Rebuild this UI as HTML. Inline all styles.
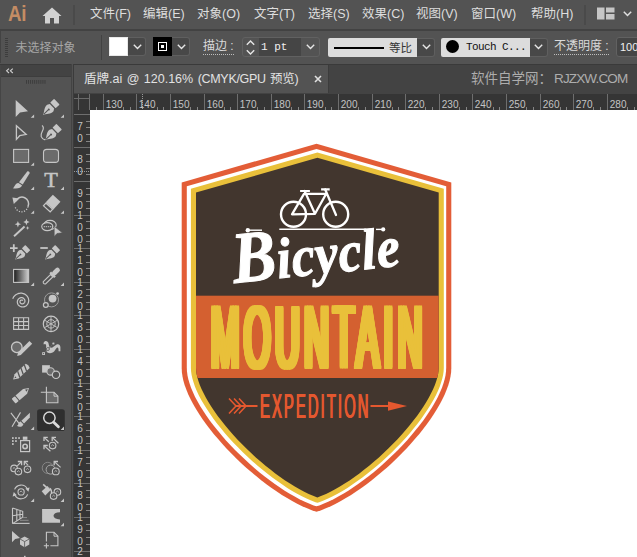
<!DOCTYPE html>
<html><head><meta charset="utf-8">
<style>
html,body{margin:0;padding:0;}
body{width:637px;height:557px;overflow:hidden;background:#535353;position:relative;font-family:"Liberation Sans","Noto Sans CJK SC",sans-serif;color:#dcdcdc;}
.abs{position:absolute;}
#menubar{left:0;top:0;width:637px;height:30px;background:#535353;}
#menubar .mi{position:absolute;top:5px;font-size:12.5px;line-height:18px;color:#dedede;white-space:nowrap;}
#sep1{left:0;top:29px;width:637px;height:2px;background:#424242;}
#ctrl{left:0;top:31px;width:637px;height:33px;background:#535353;}
#ctrl .t{position:absolute;top:6px;font-size:12px;line-height:18px;white-space:nowrap;color:#dadada;}
#ctrl .dd{position:absolute;top:6px;height:19px;width:18px;background:#484848;border:1px solid #5f5f5f;border-left:none;border-radius:0 3px 3px 0;box-sizing:border-box;}
#sep2{left:0;top:64px;width:637px;height:1px;background:#3a3a3a;}
#tabrow{left:73px;top:65px;width:564px;height:29px;background:#434343;}
#tab{left:74px;top:65px;width:254px;height:28px;background:#535353;}
#tools{left:0;top:65px;width:71px;height:492px;background:#535353;}
#toolhead{left:0;top:65px;width:71px;height:11px;background:#434343;}
#gap{left:71px;top:64px;width:3px;height:493px;background:linear-gradient(90deg,#434343 0,#434343 33.3%,#515151 33.3%,#515151 66.6%,#3b3b3b 66.6%,#3b3b3b 100%);}
#hruler{left:74px;top:94px;width:563px;height:16px;background:#3c3c3c;}
#vruler{left:74px;top:94px;width:16px;height:463px;background:#3c3c3c;}
.rl{position:absolute;font-size:10px;line-height:12px;color:#c4c4c4;white-space:nowrap;}
#canvas{left:90px;top:110px;width:547px;height:447px;background:#fff;}
</style></head><body>
<!-- MENUBAR -->
<div id="menubar" class="abs">
<div class="abs" style="left:8px;top:1.6px;font-size:21.8px;line-height:24px;font-weight:bold;color:#c48c64;letter-spacing:-0.4px;transform:scaleX(0.86);transform-origin:0 0;">Ai</div>
<svg class="abs" style="left:42px;top:7px" width="20" height="17" viewBox="0 0 20 17"><path d="M10 0.5 L19.5 9 L17 9 L17 16.5 L12 16.5 L12 11 L8 11 L8 16.5 L3 16.5 L3 9 L0.5 9 Z" fill="#d2d2d2"/></svg>
<div class="abs" style="left:73px;top:5px;width:2px;height:20px;background:#4a4a4a"></div>
<div class="mi" style="left:90px">文件(F)</div>
<div class="mi" style="left:143px">编辑(E)</div>
<div class="mi" style="left:197px">对象(O)</div>
<div class="mi" style="left:254px">文字(T)</div>
<div class="mi" style="left:308px">选择(S)</div>
<div class="mi" style="left:362px">效果(C)</div>
<div class="mi" style="left:416px">视图(V)</div>
<div class="mi" style="left:471px">窗口(W)</div>
<div class="mi" style="left:531px">帮助(H)</div>
<div class="abs" style="left:584px;top:5px;width:2px;height:20px;background:#4a4a4a"></div>
<svg class="abs" style="left:597px;top:7px" width="18" height="13" viewBox="0 0 18 13"><rect x="0" y="0.5" width="7.5" height="12" fill="#c6c6c6"/><rect x="9" y="0.5" width="8.5" height="5" fill="#c6c6c6"/><rect x="9" y="7" width="8.5" height="5.5" fill="#c6c6c6"/></svg>
<svg class="abs" style="left:622.5px;top:10.5px" width="9" height="6" viewBox="0 0 9 6"><path d="M0.8 0.8 L4.5 4.5 L8.2 0.8" fill="none" stroke="#e0e0e0" stroke-width="1.5"/></svg>
</div>
<div id="sep1" class="abs"></div>
<!-- CONTROL BAR -->
<div id="ctrl" class="abs">
<svg class="abs" style="left:5px;top:7px" width="4" height="20" viewBox="0 0 4 20"><g fill="#3d3d3d"><rect x="0" y="0" width="3" height="1"/><rect x="0" y="2" width="3" height="1"/><rect x="0" y="4" width="3" height="1"/><rect x="0" y="6" width="3" height="1"/><rect x="0" y="8" width="3" height="1"/><rect x="0" y="10" width="3" height="1"/><rect x="0" y="12" width="3" height="1"/><rect x="0" y="14" width="3" height="1"/><rect x="0" y="16" width="3" height="1"/><rect x="0" y="18" width="3" height="1"/></g></svg>
<div class="abs" style="left:0;top:0;width:1px;height:32px;background:#434343"></div>
<div class="t" style="left:15.5px;top:7.8px;color:#a6a6a6">未选择对象</div>
<div class="abs" style="left:101px;top:4px;width:1px;height:25px;background:#424242"></div>
<!-- fill swatch -->
<div class="abs" style="left:109px;top:6px;width:19px;height:19px;background:#fff;box-sizing:border-box;border:1px solid #e8e8e8"></div>
<div class="dd" style="left:128px"></div>
<svg class="abs" style="left:133px;top:13px" width="9" height="6" viewBox="0 0 9 6"><path d="M0.8 0.8 L4.5 4.5 L8.2 0.8" fill="none" stroke="#e6e6e6" stroke-width="1.4"/></svg>
<!-- stroke swatch -->
<div class="abs" style="left:153px;top:6px;width:19px;height:19px;background:#000;box-sizing:border-box;"></div>
<svg class="abs" style="left:158px;top:11px" width="9" height="9" viewBox="0 0 9 9"><rect x="0.5" y="0.5" width="8" height="8" fill="none" stroke="#fff" stroke-width="1"/><rect x="3" y="3" width="3" height="3" fill="#fff"/></svg>
<div class="dd" style="left:172px"></div>
<svg class="abs" style="left:177px;top:13px" width="9" height="6" viewBox="0 0 9 6"><path d="M0.8 0.8 L4.5 4.5 L8.2 0.8" fill="none" stroke="#e6e6e6" stroke-width="1.4"/></svg>
<div class="t" style="left:203px;border-bottom:1px dotted #bdbdbd;height:16px;line-height:16px;top:7px">描边 :</div>
<!-- spinner -->
<div class="abs" style="left:242px;top:6px;width:78px;height:20px;box-sizing:border-box;border:1px solid #616161;border-radius:3px;background:#535353"></div>
<svg class="abs" style="left:246px;top:9px" width="9" height="15" viewBox="0 0 9 15"><path d="M0.8 4.8 L4.5 1.1 L8.2 4.8 M0.8 10.2 L4.5 13.9 L8.2 10.2" fill="none" stroke="#e6e6e6" stroke-width="1.4"/></svg>
<div class="abs" style="left:259px;top:7px;width:42px;height:18px;background:#454545"></div>
<div class="abs" style="left:261px;top:7px;font-family:'Liberation Mono',monospace;font-size:11px;line-height:18px;color:#f0f0f0;white-space:pre">1 pt</div>
<svg class="abs" style="left:306px;top:13px" width="9" height="6" viewBox="0 0 9 6"><path d="M0.8 0.8 L4.5 4.5 L8.2 0.8" fill="none" stroke="#e6e6e6" stroke-width="1.4"/></svg>
<!-- stroke profile -->
<div class="abs" style="left:328px;top:7px;width:89px;height:19px;background:#dcdcdc;border-radius:2px 0 0 2px"></div>
<div class="abs" style="left:334px;top:15.6px;width:50px;height:2.6px;background:#000"></div>
<div class="abs" style="left:389px;top:8px;font-size:11.5px;line-height:18px;color:#333;white-space:nowrap">等比</div>
<div class="dd" style="left:417px;top:7px;height:19px"></div>
<svg class="abs" style="left:422px;top:13px" width="9" height="6" viewBox="0 0 9 6"><path d="M0.8 0.8 L4.5 4.5 L8.2 0.8" fill="none" stroke="#e6e6e6" stroke-width="1.4"/></svg>
<!-- brush -->
<div class="abs" style="left:441px;top:7px;width:89px;height:19px;background:#dcdcdc;border-radius:2px 0 0 2px"></div>
<div class="abs" style="left:446px;top:9px;width:13px;height:13px;border-radius:50%;background:#000"></div>
<div class="abs" style="left:466px;top:7px;font-family:'Liberation Mono',monospace;font-size:11px;line-height:18px;color:#111;white-space:pre;letter-spacing:-0.6px">Touch C...</div>
<div class="dd" style="left:530px;top:7px;height:19px"></div>
<svg class="abs" style="left:534px;top:13px" width="9" height="6" viewBox="0 0 9 6"><path d="M0.8 0.8 L4.5 4.5 L8.2 0.8" fill="none" stroke="#e6e6e6" stroke-width="1.4"/></svg>
<div class="t" style="left:554px;border-bottom:1px dotted #bdbdbd;height:16px;line-height:16px;top:7px">不透明度 :</div>
<div class="abs" style="left:616px;top:6px;width:30px;height:20px;box-sizing:border-box;border:1px solid #616161;border-radius:3px;background:#454545"></div>
<div class="abs" style="left:620px;top:7px;font-size:11px;line-height:18px;color:#f0f0f0;">100</div>
</div>
<div id="sep2" class="abs"></div>
<div id="tabrow" class="abs"></div>
<div id="tab" class="abs"></div>
<div class="abs" style="left:328px;top:65px;width:1px;height:28px;background:#3c3c3c"></div>
<div class="abs tabt" style="left:84px;top:70px;font-size:12.5px;line-height:18px;color:#e2e2e2;white-space:nowrap;word-spacing:1px">盾牌.ai @ 120.16% <span style="letter-spacing:-0.3px">(CMYK/GPU 预览)</span></div>
<svg class="abs" style="left:314px;top:75px" width="8" height="8" viewBox="0 0 8 8"><path d="M1 1 L7 7 M7 1 L1 7" stroke="#e0e0e0" stroke-width="1.6" fill="none"/></svg>
<div class="abs tabt" style="left:471px;top:69px;font-size:13.5px;line-height:20px;color:#adadad;white-space:nowrap">软件自学网：<span style="letter-spacing:-0.85px;margin-left:2px">RJZXW.COM</span></div>
<div id="tools" class="abs"></div>
<div id="toolhead" class="abs"></div>
<div id="gap" class="abs"></div>
<div class="abs" style="left:0;top:76px;width:71px;height:1px;background:#3d3d3d"></div>
<div class="abs" style="left:0;top:65px;width:1px;height:492px;background:#454545"></div>
<!-- TOOLS -->
<svg class="abs" style="left:0;top:65px" width="72" height="492" viewBox="0 65 72 492">
<path d="M9,68.6 L6.6,70.8 L9,73 M12.8,68.6 L10.4,70.8 L12.8,73" fill="none" stroke="#d0d0d0" stroke-width="1.1"/>
<g fill="#3c3c3c"><rect x="26.00" y="80" width="0.9" height="3.8"/><rect x="28.06" y="80" width="0.9" height="3.8"/><rect x="30.12" y="80" width="0.9" height="3.8"/><rect x="32.18" y="80" width="0.9" height="3.8"/><rect x="34.24" y="80" width="0.9" height="3.8"/><rect x="36.30" y="80" width="0.9" height="3.8"/><rect x="38.36" y="80" width="0.9" height="3.8"/><rect x="40.42" y="80" width="0.9" height="3.8"/><rect x="42.48" y="80" width="0.9" height="3.8"/><rect x="44.54" y="80" width="0.9" height="3.8"/></g>
<path d="M15.7,99.9 V117 L20,112.4 L28,111.3 Z" fill="#c6c6c6"/>
<path d="M30.7,117.8 h3.4 v-3.4 Z" fill="#c6c6c6"/>
<g transform="translate(43,115) rotate(46) scale(1.170,0.960)"><path d="M0,0 C-0.8,-3 -4.4,-6.5 -3.9,-10.6 L-2.7,-13 L2.7,-13 L3.9,-10.6 C4.4,-6.5 0.8,-3 0,0 Z" fill="#c6c6c6"/><rect x="-3.4" y="-20" width="6.8" height="5.6" rx="0.6" fill="#c6c6c6"/><path d="M0,-1.2 V-8" stroke="#535353" stroke-width="0.9"/><circle cx="0" cy="-8.4" r="0.9" fill="#535353"/></g>
<path d="M60.6,117.8 h3.4 v-3.4 Z" fill="#c6c6c6"/>
<path d="M16.4,125.8 V139.4 L19.7,135.7 L26.2,134.4 Z" fill="none" stroke="#c6c6c6" stroke-width="1.3" stroke-linejoin="miter"/>
<g transform="translate(45.3,140) rotate(46) scale(1.170,0.960)"><path d="M0,0 C-0.8,-3 -4.4,-6.5 -3.9,-10.6 L-2.7,-13 L2.7,-13 L3.9,-10.6 C4.4,-6.5 0.8,-3 0,0 Z" fill="#c6c6c6"/><rect x="-3.4" y="-20" width="6.8" height="5.6" rx="0.6" fill="#c6c6c6"/><path d="M0,-1.2 V-8" stroke="#535353" stroke-width="0.9"/><circle cx="0" cy="-8.4" r="0.9" fill="#535353"/></g>
<path d="M42,125.4 C46.5,128.5 39.6,132.5 41.2,136.6 C42,138.6 43.8,139.6 45.2,139.9" fill="none" stroke="#c6c6c6" stroke-width="1.2"/>
<rect x="13.6" y="149.4" width="15" height="13" fill="#6b6b6b" stroke="#c6c6c6" stroke-width="1.1"/>
<path d="M30.7,165.8 h3.4 v-3.4 Z" fill="#c6c6c6"/>
<rect x="43.5" y="149.4" width="15" height="13" rx="3.2" fill="#6b6b6b" stroke="#c6c6c6" stroke-width="1.1"/>
<path d="M27.2,171.4 C28.6,170.8 30.2,172 29.5,173.6 L22.7,184.6 L19,182.2 Z" fill="#c6c6c6"/>
<path d="M18.4,182.9 L22,185.3 C21.4,188.2 16.8,189 12.8,188.2 C15.2,186.6 14.6,183.2 18.4,182.9 Z" fill="#c6c6c6"/>
<path d="M30.7,190 h3.4 v-3.4 Z" fill="#c6c6c6"/>
<text x="51" y="186.8" text-anchor="middle" font-family="'Liberation Serif',serif" font-size="20.6" fill="#c6c6c6" stroke="#c6c6c6" stroke-width="0.5" transform="translate(51,0) scale(1.08,1) translate(-51,0)">T</text>
<path d="M60.6,190 h3.4 v-3.4 Z" fill="#c6c6c6"/>
<path d="M15.8,201 A6.6,6.6 0 1 1 28,206.6" fill="none" stroke="#c6c6c6" stroke-width="1.5"/>
<path d="M12.4,197.4 L19.4,198.4 L13.8,204 Z" fill="#c6c6c6"/>
<path d="M28,206.6 A6.6,6.6 0 0 1 15,206" fill="none" stroke="#c6c6c6" stroke-width="1.3" stroke-dasharray="1.1 1.5"/>
<path d="M30.7,213.8 h3.4 v-3.4 Z" fill="#c6c6c6"/>
<g transform="translate(51.6,203.7) rotate(-47)"><rect x="-3" y="-5.2" width="10.4" height="10.4" fill="#c6c6c6"/><rect x="-7" y="-4.6" width="3.6" height="9.2" fill="none" stroke="#c6c6c6" stroke-width="1.2"/></g>
<path d="M60.6,213.8 h3.4 v-3.4 Z" fill="#c6c6c6"/>
<path d="M13.4,235.6 L23.9,225.8 L25.2,227.2 L14.7,237 Z" fill="#c6c6c6"/>
<path d="M17.9,221.0 L18.796,223.304 L21.099999999999998,224.2 L18.796,225.09599999999998 L17.9,227.39999999999998 L17.003999999999998,225.09599999999998 L14.7,224.2 L17.003999999999998,223.304 Z" fill="#c6c6c6"/>
<path d="M26.4,218.8 L27.296,221.104 L29.599999999999998,222 L27.296,222.896 L26.4,225.2 L25.503999999999998,222.896 L23.2,222 L25.503999999999998,221.104 Z" fill="#c6c6c6"/>
<path d="M27.6,226.1 L28.132,227.468 L29.5,228 L28.132,228.532 L27.6,229.9 L27.068,228.532 L25.700000000000003,228 L27.068,227.468 Z" fill="#c6c6c6"/>
<ellipse cx="50" cy="225" rx="6.2" ry="4.6" fill="none" stroke="#c6c6c6" stroke-width="1.1"/>
<ellipse cx="47.3" cy="226.6" rx="5.6" ry="4" fill="#535353" stroke="#c6c6c6" stroke-width="1.1"/>
<path d="M43.8,226.6 H53" stroke="#c6c6c6" stroke-width="1.1" stroke-dasharray="1 1"/>
<path d="M54.2,226.3 V236.6 L57,233.5 L62.4,232.8 Z" fill="#c6c6c6" stroke="#535353" stroke-width="0.6"/>
<path d="M10,248.1 H17.6 M13.8,244.3 V251.9" stroke="#c6c6c6" stroke-width="1.8"/>
<g transform="translate(15.2,259.4) rotate(47) scale(1.053,0.864)"><path d="M0,0 C-0.8,-3 -4.4,-6.5 -3.9,-10.6 L-2.7,-13 L2.7,-13 L3.9,-10.6 C4.4,-6.5 0.8,-3 0,0 Z" fill="#c6c6c6"/><rect x="-3.4" y="-20" width="6.8" height="5.6" rx="0.6" fill="#c6c6c6"/><path d="M0,-1.2 V-8" stroke="#535353" stroke-width="0.9"/><circle cx="0" cy="-8.4" r="0.9" fill="#535353"/></g>
<path d="M40.3,248 H47.8" stroke="#c6c6c6" stroke-width="1.8"/>
<g transform="translate(45.1,259.4) rotate(47) scale(1.053,0.864)"><path d="M0,0 C-0.8,-3 -4.4,-6.5 -3.9,-10.6 L-2.7,-13 L2.7,-13 L3.9,-10.6 C4.4,-6.5 0.8,-3 0,0 Z" fill="#c6c6c6"/><rect x="-3.4" y="-20" width="6.8" height="5.6" rx="0.6" fill="#c6c6c6"/><path d="M0,-1.2 V-8" stroke="#535353" stroke-width="0.9"/><circle cx="0" cy="-8.4" r="0.9" fill="#535353"/></g>
<defs><linearGradient id="gr" x1="0" x2="1" y1="0" y2="0"><stop offset="0" stop-color="#1a1a1a"/><stop offset="1" stop-color="#cfcfcf"/></linearGradient></defs>
<rect x="13.6" y="269.4" width="15" height="13" fill="url(#gr)" stroke="#c6c6c6" stroke-width="1.1"/>
<path d="M30.7,286 h3.4 v-3.4 Z" fill="#c6c6c6"/>
<g transform="translate(43.4,283.7) rotate(46)"><path d="M-1.6,-1.4 V-11.5 H1.6 V-1.4 Q0,0.8 -1.6,-1.4 Z" fill="none" stroke="#c6c6c6" stroke-width="1.1"/><rect x="-3.4" y="-14" width="6.8" height="2.4" fill="#c6c6c6"/><rect x="-2.4" y="-22" width="4.8" height="9" rx="2.4" fill="#c6c6c6"/></g>
<path d="M60.6,286 h3.4 v-3.4 Z" fill="#c6c6c6"/>
<path d="M12.7,298.8 L13.1,298.0 L13.5,297.2 L14.0,296.5 L14.6,295.9 L15.2,295.3 L15.9,294.8 L16.6,294.3 L17.3,294.0 L18.1,293.6 L18.8,293.4 L19.6,293.3 L20.4,293.2 L21.1,293.2 L21.9,293.2 L22.6,293.4 L23.4,293.6 L24.1,293.8 L24.7,294.1 L25.3,294.5 L25.9,294.9 L26.4,295.4 L26.9,295.9 L27.3,296.4 L27.7,297.0 L28.0,297.6 L28.3,298.2 L28.5,298.9 L28.6,299.5 L28.7,300.1 L28.7,300.8 L28.6,301.4 L28.5,302.0 L28.4,302.6 L28.1,303.2 L27.9,303.7 L27.6,304.2 L27.2,304.7 L26.9,305.1 L26.4,305.5 L26.0,305.9 L25.5,306.2 L25.0,306.4 L24.5,306.6 L24.0,306.8 L23.5,306.9 L23.0,306.9 L22.4,307.0 L21.9,306.9 L21.4,306.8 L20.9,306.7 L20.5,306.5 L20.0,306.3 L19.6,306.1 L19.2,305.8 L18.9,305.5 L18.5,305.1 L18.2,304.8 L18.0,304.4 L17.8,304.0 L17.6,303.6 L17.5,303.1 L17.4,302.7 L17.3,302.3 L17.3,301.8 L17.4,301.4 L17.4,301.0 L17.5,300.6 L17.7,300.2 L17.9,299.9 L18.1,299.5 L18.3,299.2 L18.6,298.9 L18.8,298.6 L19.1,298.4 L19.4,298.2 L19.8,298.0 L20.1,297.9 L20.5,297.8 L20.8,297.7 L21.2,297.7 L21.5,297.7 L21.9,297.7 L22.2,297.7 L22.5,297.8 L22.9,297.9 L23.2,298.1 L23.4,298.3 L23.7,298.4 L23.9,298.7 L24.2,298.9 L24.3,299.1 L24.5,299.4 L24.6,299.7 L24.8,299.9 L24.8,300.2 L24.9,300.5 L24.9,300.8 L24.9,301.1 L24.9,301.4 L24.9,301.6 L24.8,301.9 L24.7,302.2 L24.6,302.4 L24.5,302.6 L24.3,302.9 L24.1,303.0 L23.9,303.2 L23.7,303.4 L23.5,303.5 L23.3,303.6 L23.1,303.7 L22.9,303.8 L22.6,303.8 L22.4,303.8 L22.2,303.8 L21.9,303.8 L21.7,303.8 L21.5,303.7 L21.3,303.6 L21.1,303.6 L20.9,303.4 L20.7,303.3 L20.6,303.2 L20.5,303.0 L20.3,302.9 L20.2,302.7 L20.1,302.5 L20.1,302.3 L20.0,302.2 L20.0,302.0 L20.0,301.8 L20.0,301.6 L20.0,301.4 L20.0,301.3 L20.1,301.1 L20.2,300.9 L20.2,300.8 L20.3,300.6 L20.4,300.5 L20.5,300.4 L20.7,300.3 L20.8,300.2 L20.9,300.1 L21.0,300.1 L21.2,300.0 L21.3,300.0 L21.5,300.0 L21.6,300.0 L21.7,300.0 L21.9,300.0 L22.0,300.0 L22.1,300.1 L22.2,300.1 L22.4,300.2 L22.4,300.3 L22.5,300.3 L22.6,300.4 L22.7,300.5 L22.7,300.6 L22.8,300.7" fill="none" stroke="#c6c6c6" stroke-width="1.2"/>
<circle cx="51.5" cy="299.9" r="7" fill="none" stroke="#9c9c9c" stroke-width="1"/><circle cx="52.6" cy="298.6" r="3.9" fill="#c6c6c6"/><circle cx="45.8" cy="305" r="2.4" fill="#535353" stroke="#c6c6c6" stroke-width="1.2"/><circle cx="57.6" cy="293.6" r="1.4" fill="#c6c6c6"/>
<path d="M13.6,317.7 H28.6 V329.4 H13.6 Z M18.6,317.7 V329.4 M23.6,317.7 V329.4 M13.6,321.6 H28.6 M13.6,325.5 H28.6" fill="none" stroke="#c6c6c6" stroke-width="1.1"/>
<circle cx="51" cy="323.9" r="7.7" fill="none" stroke="#c6c6c6" stroke-width="1.2"/><circle cx="51" cy="323.9" r="4.2" fill="none" stroke="#c6c6c6" stroke-width="1"/><path d="M51,323.9 L57.7,327.8 M51,323.9 L51.0,331.6 M51,323.9 L44.3,327.8 M51,323.9 L44.3,320.0 M51,323.9 L51.0,316.2 M51,323.9 L57.7,320.0 " stroke="#c6c6c6" stroke-width="0.9" fill="none"/>
<circle cx="16.8" cy="347.3" r="5.3" fill="#6b6b6b" stroke="#c6c6c6" stroke-width="1.3"/>
<path d="M29.4,341 L32.2,343.8 L20.8,355 L17.2,356 L18,352.4 Z" fill="#c6c6c6"/>
<path d="M45,341.2 C46.6,340.6 48.2,341.6 48.6,343.6 C49,345.6 49.2,347 50.4,347.6 C52.4,348.4 54.4,345.4 56.6,344.4 C58.6,343.6 60.2,344.6 60.4,347 L60.4,351.2 L58.6,351.2 C58.6,349 58.4,347.4 57.4,347.4 C56,347.6 55.4,350.8 52.6,352.6 C50.4,353.8 47.6,353.4 46.6,351.6 C45.4,349.4 46.6,346.8 46,344.8 C45.6,343.8 44.6,343.6 43.8,344.6 C43.2,343 43.8,341.8 45,341.2 Z" fill="#c6c6c6"/><path d="M44.6,352.6 L53,344" stroke="#6a6a6a" stroke-width="0.8"/><rect x="42.2" y="352.2" width="2.8" height="2.8" fill="#c6c6c6"/><rect x="43.1" y="353.1" width="1" height="1" fill="#535353"/><circle cx="47.9" cy="349" r="1.5" fill="#c6c6c6" stroke="#555" stroke-width="0.8"/><circle cx="53.4" cy="343.5" r="1.3" fill="#c6c6c6" stroke="#535353" stroke-width="0.5"/>
<g transform="translate(13.1,379.6) rotate(47)"><path d="M0,0 L-2.9,-4.8 L-2.9,-20 Q0,-21.6 2.9,-20 L2.9,-4.8 Z" fill="#c6c6c6"/><path d="M-3,-9 L3,-6.4 M-3,-13.6 L3,-11 M-3,-18.2 L3,-15.6" stroke="#535353" stroke-width="1.3"/><path d="M0,-1.8 L-0.9,-3.8 H0.9 Z" fill="#535353"/></g>
<rect x="42.1" y="365.2" width="7.8" height="7.4" fill="#c6c6c6"/><circle cx="50.6" cy="371.4" r="3.7" fill="#6b6b6b" stroke="#c6c6c6" stroke-width="1.1"/><circle cx="56" cy="374.8" r="3.7" fill="#535353" stroke="#c6c6c6" stroke-width="1.2"/>
<g transform="translate(29.2,387.8) rotate(49.2)"><path d="M0,0.2 L3.1,5.4 V15.4 H-3.1 V5.4 Z" fill="#c6c6c6"/><path d="M0,1.8 L1.3,4.4 H-1.3 Z" fill="#535353"/><rect x="-3.1" y="16.4" width="6.2" height="4.2" rx="0.9" fill="#c6c6c6"/></g>
<path d="M46.4,392.3 H54 L57.9,396.2 V402.8 H46.4 Z" fill="#6b6b6b" stroke="#c6c6c6" stroke-width="1.1"/><path d="M54,392.3 V396.2 H57.9" fill="none" stroke="#c6c6c6" stroke-width="1"/><path d="M40.8,392.3 H46.4 M46.4,386.8 V392.3" stroke="#c6c6c6" stroke-width="1.1"/>
<path d="M10.9,412.9 L20,424.7 M20.5,412.4 L12,426.8" stroke="#c6c6c6" stroke-width="1.1" fill="none"/>
<path d="M29.9,412.8 L29.8,417.6 L24,423.4 L21.4,420.8 Z" fill="#c6c6c6"/><path d="M20.6,421.4 L23.4,424.2 C22.8,427 19,427.4 16.8,425.8 C19,425 18.2,421.8 20.6,421.4 Z" fill="#c6c6c6"/>
<path d="M30.7,430 h3.4 v-3.4 Z" fill="#c6c6c6"/>
<rect x="37.1" y="409.2" width="27.7" height="21.9" rx="2.6" fill="#2f2f2f"/><circle cx="49.4" cy="417.8" r="5.7" fill="none" stroke="#dadada" stroke-width="1.5"/><path d="M53.7,422.2 L58.4,426.8" stroke="#dadada" stroke-width="2.8" stroke-linecap="round"/>
<path d="M60.6,430 h3.4 v-3.4 Z" fill="#c6c6c6"/>
<rect x="20.6" y="440.6" width="9" height="11" fill="none" stroke="#c6c6c6" stroke-width="1.2"/><circle cx="25.1" cy="446.4" r="2.2" fill="none" stroke="#c6c6c6" stroke-width="1.6"/><rect x="22.8" y="436.6" width="4.6" height="3.2" fill="#c6c6c6"/>
<g fill="#c6c6c6"><rect x="12" y="437.2" width="1.7" height="1.7"/><rect x="15.1" y="437.2" width="1.7" height="1.7"/><rect x="18.2" y="437.2" width="1.7" height="1.7"/><rect x="12" y="440.2" width="1.7" height="1.7"/><rect x="15.1" y="440.2" width="1.7" height="1.7"/><rect x="12" y="443.2" width="1.7" height="1.7"/></g>
<path d="M44.6,437.9 L48.8,441.7" stroke="#c6c6c6" stroke-width="1.2" fill="none"/><path d="M47.8,437.3 L44.0,437.3 L44.0,441.1" stroke="#c6c6c6" stroke-width="1.3" fill="none"/>
<path d="M52.8,437.9 L58.4,443.3" stroke="#c6c6c6" stroke-width="1.2" fill="none"/><path d="M56.0,437.3 L52.2,437.3 L52.2,441.1" stroke="#c6c6c6" stroke-width="1.3" fill="none"/>
<path d="M44.6,446.1 L50.4,451.3" stroke="#c6c6c6" stroke-width="1.2" fill="none"/><path d="M47.8,445.5 L44.0,445.5 L44.0,449.3" stroke="#c6c6c6" stroke-width="1.3" fill="none"/>
<circle cx="52.6" cy="445.6" r="3.3" fill="#535353" stroke="#c6c6c6" stroke-width="1.1"/><path d="M51.300000000000004,445.90000000000003 L52.6,444.70000000000005 L53.9,445.90000000000003" fill="none" stroke="#c6c6c6" stroke-width="0.8"/>
<circle cx="14.1" cy="468.4" r="3.3" fill="#535353" stroke="#c6c6c6" stroke-width="1.1"/><path d="M12.799999999999999,468.7 L14.1,467.5 L15.4,468.7" fill="none" stroke="#c6c6c6" stroke-width="0.8"/>
<circle cx="18.4" cy="471.6" r="3.3" fill="#535353" stroke="#c6c6c6" stroke-width="1.1"/><path d="M17.099999999999998,471.90000000000003 L18.4,470.70000000000005 L19.7,471.90000000000003" fill="none" stroke="#c6c6c6" stroke-width="0.8"/>
<circle cx="27.5" cy="469.3" r="3.3" fill="#535353" stroke="#c6c6c6" stroke-width="1.1"/><path d="M26.2,469.6 L27.5,468.40000000000003 L28.8,469.6" fill="none" stroke="#c6c6c6" stroke-width="0.8"/>
<path d="M21.0,462.1 L17.3,465.8" stroke="#c6c6c6" stroke-width="1.2" fill="none"/><path d="M17.8,461.5 L21.6,461.5 L21.6,465.3" stroke="#c6c6c6" stroke-width="1.3" fill="none"/>
<path d="M24.9,462.1 L28.0,465.2" stroke="#c6c6c6" stroke-width="1.2" fill="none"/><path d="M28.1,461.5 L24.3,461.5 L24.3,465.3" stroke="#c6c6c6" stroke-width="1.3" fill="none"/>
<circle cx="47.8" cy="467.9" r="5.6" fill="none" stroke="#858585" stroke-width="1"/><circle cx="50.6" cy="469.6" r="4.5" fill="#535353" stroke="#a8a8a8" stroke-width="1"/>
<circle cx="55.8" cy="471.4" r="3.4" fill="#535353" stroke="#c6c6c6" stroke-width="1.1"/><path d="M54.5,471.7 L55.8,470.5 L57.099999999999994,471.7" fill="none" stroke="#c6c6c6" stroke-width="0.8"/>
<path d="M54.8,462.1 L60.6,467.4" stroke="#c6c6c6" stroke-width="1.2" fill="none"/><path d="M58.0,461.5 L54.2,461.5 L54.2,465.3" stroke="#c6c6c6" stroke-width="1.3" fill="none"/>
<circle cx="21.1" cy="491.9" r="3.1" fill="#535353" stroke="#c6c6c6" stroke-width="1.1"/><path d="M19.8,492.2 L21.1,491.0 L22.400000000000002,492.2" fill="none" stroke="#c6c6c6" stroke-width="0.8"/>
<path d="M14.6,489.4 A7,7 0 0 1 27.2,488.6 M27.6,494.4 A7,7 0 0 1 15,495.2" fill="none" stroke="#c6c6c6" stroke-width="1.2"/><path d="M25.4,488.6 L29.6,487.4 L28.4,491.8 Z M16.8,495.2 L12.6,496.4 L13.8,492 Z" fill="#c6c6c6"/>
<path d="M30.7,502 h3.4 v-3.4 Z" fill="#c6c6c6"/>
<path d="M41.7,491.2 L45.3,495.4 L50.7,490.1 L47.5,485.9 Z" fill="#c6c6c6"/><path d="M43.2,484.4 L47,487.8" stroke="#c6c6c6" stroke-width="1.6" fill="none"/><path d="M49.6,487.6 C51.6,488.4 52.4,490.6 52.4,494 L50.8,493 C51,491.4 50.6,490.4 49.6,489.8 Z" fill="#c6c6c6"/>
<circle cx="57.4" cy="491.9" r="3.3" fill="#535353" stroke="#c6c6c6" stroke-width="1.1"/><path d="M56.1,492.2 L57.4,491.0 L58.699999999999996,492.2" fill="none" stroke="#c6c6c6" stroke-width="0.8"/>
<circle cx="53.6" cy="496.1" r="3.3" fill="#535353" stroke="#c6c6c6" stroke-width="1.1"/><path d="M52.300000000000004,496.40000000000003 L53.6,495.20000000000005 L54.9,496.40000000000003" fill="none" stroke="#c6c6c6" stroke-width="0.8"/>
<path d="M60.6,502 h3.4 v-3.4 Z" fill="#c6c6c6"/>
<path d="M12.5,508.1 V523.6 M12.5,508.1 L22.7,511.3 V517.2 L12.5,523.6 M16.8,509.4 V520.9 M20,510.4 V518.9 M12.5,515.8 L22.7,514.3" fill="none" stroke="#c6c6c6" stroke-width="1.1"/>
<path d="M22.7,517.6 H27 M20,520.3 H28.6" stroke="#8e8e8e" stroke-width="1"/><path d="M12.5,523.4 H29.6" stroke="#c6c6c6" stroke-width="1.1"/>
<path d="M42.1,508.9 H60 V512.3 C51.4,512.3 51.4,519.4 60,519.4 V522.8 H42.1 Z" fill="#c6c6c6"/>
<path d="M60.6,526.2 h3.4 v-3.4 Z" fill="#c6c6c6"/>
<path d="M12,531.1 V542.3 L15.2,539.1 L20,538 Z" fill="#c6c6c6"/>
<path d="M24.6,536.4 L29.3,539 V544.6 L24.6,547.2 L20,544.6 V539 Z" fill="#c6c6c6"/><path d="M20,539 L24.6,541.6 L29.3,539 M24.6,541.6 V547.2" fill="none" stroke="#535353" stroke-width="0.8"/>
<path d="M46.4,541.6 V532.3 H54 L57.9,536.2 V545.8 H50.4" fill="none" stroke="#c6c6c6" stroke-width="1.1"/><path d="M54,532.3 V536.2 H57.9" fill="none" stroke="#c6c6c6" stroke-width="1"/><path d="M43.8,545.8 H49 M46.4,543.2 V548.4" stroke="#c6c6c6" stroke-width="1.1"/>
<rect x="24" y="555.8" width="1.6" height="1.2" fill="#c6c6c6"/>
</svg>
<!-- /TOOLS -->
<div id="canvas" class="abs"></div>
<!-- BADGE -->
<svg class="abs" style="left:90px;top:110px" width="547" height="447" viewBox="90 110 547 447">
<defs><clipPath id="brc"><path d="M317.4,157.8 L438.7,192.6 L438.7,367.9 L438.5,371.0 L438.1,374.0 L437.3,377.4 L436.3,381.0 L434.9,384.9 L433.2,388.9 L431.2,393.1 L428.9,397.5 L426.3,402.0 L423.5,406.6 L420.3,411.2 L417.0,415.9 L413.4,420.6 L409.7,425.3 L405.7,430.1 L401.6,434.8 L397.3,439.4 L392.8,444.0 L388.3,448.6 L383.6,453.0 L378.9,457.4 L374.1,461.6 L369.2,465.7 L364.3,469.6 L359.4,473.4 L354.5,477.0 L349.6,480.4 L344.7,483.6 L339.9,486.5 L335.1,489.2 L330.5,491.7 L326.0,493.9 L321.6,495.8 L317.4,497.4 L317.4,497.5 L317.3,497.4 L313.1,495.8 L308.7,493.9 L304.2,491.7 L299.6,489.2 L294.8,486.5 L290.0,483.6 L285.1,480.4 L280.2,477.0 L275.3,473.4 L270.4,469.6 L265.5,465.7 L260.6,461.6 L255.8,457.4 L251.1,453.0 L246.4,448.6 L241.9,444.0 L237.4,439.4 L233.1,434.8 L229.0,430.1 L225.0,425.3 L221.3,420.6 L217.7,415.9 L214.4,411.2 L211.2,406.6 L208.4,402.0 L205.8,397.5 L203.5,393.1 L201.5,388.9 L199.8,384.9 L198.4,381.0 L197.4,377.4 L196.6,374.0 L196.2,371.0 L196.0,367.9 L196.0,192.6 Z"/></clipPath></defs>
<path d="M316.5,143.8 L451.3,182.4 L451.3,368.2 L451.1,372.2 L450.5,376.4 L449.6,380.7 L448.3,385.2 L446.6,389.8 L444.7,394.4 L442.4,399.2 L439.9,404.0 L437.0,408.9 L433.9,413.9 L430.6,418.9 L427.0,423.9 L423.2,428.9 L419.3,433.9 L415.1,438.8 L410.8,443.8 L406.3,448.7 L401.6,453.5 L396.9,458.2 L392.0,462.9 L387.1,467.4 L382.0,471.8 L376.9,476.1 L371.8,480.2 L366.6,484.2 L361.4,488.0 L356.2,491.6 L351.1,495.0 L345.9,498.1 L340.8,501.1 L335.8,503.7 L330.8,506.2 L325.9,508.3 L321.2,510.2 L316.5,511.7 L311.8,510.2 L307.1,508.3 L302.2,506.2 L297.2,503.7 L292.2,501.1 L287.1,498.1 L281.9,495.0 L276.8,491.6 L271.6,488.0 L266.4,484.2 L261.2,480.2 L256.1,476.1 L251.0,471.8 L245.9,467.4 L241.0,462.9 L236.1,458.2 L231.4,453.5 L226.7,448.7 L222.2,443.8 L217.9,438.8 L213.7,433.9 L209.8,428.9 L206.0,423.9 L202.4,418.9 L199.1,413.9 L196.0,408.9 L193.1,404.0 L190.6,399.2 L188.3,394.4 L186.4,389.8 L184.7,385.2 L183.4,380.7 L182.5,376.4 L181.9,372.2 L181.7,368.2 L181.7,182.4 Z" fill="#e35d37"/>
<path d="M316.5,149.1 L446.2,186.2 L446.2,368.1 L446.0,371.7 L445.5,375.5 L444.6,379.5 L443.4,383.6 L441.9,387.9 L440.0,392.3 L437.9,396.9 L435.4,401.6 L432.7,406.3 L429.7,411.1 L426.4,416.0 L422.9,420.9 L419.2,425.8 L415.3,430.6 L411.2,435.5 L407.0,440.4 L402.5,445.2 L398.0,449.9 L393.3,454.6 L388.5,459.1 L383.7,463.6 L378.7,468.0 L373.7,472.2 L368.6,476.2 L363.6,480.1 L358.5,483.8 L353.4,487.3 L348.3,490.7 L343.3,493.7 L338.3,496.6 L333.5,499.2 L328.7,501.5 L324.0,503.6 L319.4,505.4 L316.5,506.3 L313.6,505.4 L309.0,503.6 L304.3,501.5 L299.5,499.2 L294.7,496.6 L289.7,493.7 L284.7,490.7 L279.6,487.3 L274.5,483.8 L269.4,480.1 L264.4,476.2 L259.3,472.2 L254.3,468.0 L249.3,463.6 L244.5,459.1 L239.7,454.6 L235.0,449.9 L230.5,445.2 L226.0,440.4 L221.8,435.5 L217.7,430.6 L213.8,425.8 L210.1,420.9 L206.6,416.0 L203.3,411.1 L200.3,406.3 L197.6,401.6 L195.1,396.9 L193.0,392.3 L191.1,387.9 L189.6,383.6 L188.4,379.5 L187.5,375.5 L187.0,371.7 L186.8,368.1 L186.8,186.2 Z" fill="#ffffff"/>
<path d="M317.4,152.5 L443.8,188.7 L443.8,368.0 L443.6,371.4 L443.1,374.9 L442.3,378.6 L441.1,382.6 L439.7,386.7 L437.9,391.0 L435.8,395.4 L433.4,400.0 L430.7,404.6 L427.7,409.3 L424.5,414.1 L421.1,418.9 L417.5,423.7 L413.6,428.6 L409.6,433.4 L405.4,438.2 L401.0,442.9 L396.5,447.6 L391.9,452.2 L387.1,456.7 L382.3,461.2 L377.4,465.4 L372.5,469.6 L367.5,473.6 L362.4,477.5 L357.4,481.1 L352.4,484.6 L347.4,487.9 L342.5,490.9 L337.6,493.7 L332.8,496.3 L328.1,498.5 L323.6,500.5 L319.2,502.2 L317.4,502.8 L315.5,502.2 L311.1,500.5 L306.6,498.5 L301.9,496.3 L297.1,493.7 L292.2,490.9 L287.3,487.9 L282.3,484.6 L277.3,481.1 L272.3,477.5 L267.2,473.6 L262.2,469.6 L257.3,465.4 L252.4,461.2 L247.6,456.7 L242.8,452.2 L238.2,447.6 L233.7,442.9 L229.3,438.2 L225.1,433.4 L221.1,428.6 L217.2,423.7 L213.6,418.9 L210.2,414.1 L207.0,409.3 L204.0,404.6 L201.3,400.0 L198.9,395.4 L196.8,391.0 L195.0,386.7 L193.6,382.6 L192.4,378.6 L191.6,374.9 L191.1,371.4 L190.9,368.0 L190.9,188.7 Z" fill="#e9c03a"/>
<path d="M317.4,157.8 L438.7,192.6 L438.7,367.9 L438.5,371.0 L438.1,374.0 L437.3,377.4 L436.3,381.0 L434.9,384.9 L433.2,388.9 L431.2,393.1 L428.9,397.5 L426.3,402.0 L423.5,406.6 L420.3,411.2 L417.0,415.9 L413.4,420.6 L409.7,425.3 L405.7,430.1 L401.6,434.8 L397.3,439.4 L392.8,444.0 L388.3,448.6 L383.6,453.0 L378.9,457.4 L374.1,461.6 L369.2,465.7 L364.3,469.6 L359.4,473.4 L354.5,477.0 L349.6,480.4 L344.7,483.6 L339.9,486.5 L335.1,489.2 L330.5,491.7 L326.0,493.9 L321.6,495.8 L317.4,497.4 L317.4,497.5 L317.3,497.4 L313.1,495.8 L308.7,493.9 L304.2,491.7 L299.6,489.2 L294.8,486.5 L290.0,483.6 L285.1,480.4 L280.2,477.0 L275.3,473.4 L270.4,469.6 L265.5,465.7 L260.6,461.6 L255.8,457.4 L251.1,453.0 L246.4,448.6 L241.9,444.0 L237.4,439.4 L233.1,434.8 L229.0,430.1 L225.0,425.3 L221.3,420.6 L217.7,415.9 L214.4,411.2 L211.2,406.6 L208.4,402.0 L205.8,397.5 L203.5,393.1 L201.5,388.9 L199.8,384.9 L198.4,381.0 L197.4,377.4 L196.6,374.0 L196.2,371.0 L196.0,367.9 L196.0,192.6 Z" fill="#42362e"/>
<rect x="190" y="295.7" width="255" height="82.3" fill="#d46030" clip-path="url(#brc)"/>
<!-- bicycle -->
<g fill="none" stroke="#fff" stroke-width="2.4" stroke-linejoin="round">
<circle cx="293.5" cy="214.3" r="12.5"/>
<circle cx="335.7" cy="214.3" r="12.5"/>
<path d="M292,214.3 L304,193.8 L326.2,193.8 L315,213.8 Z M304.6,191 L315,213.8 M325.2,189.5 L336,215" stroke-width="2.3" stroke-linecap="round"/>
<path d="M300.1,191 H309.9 M321.1,189.4 H329.7" stroke-width="2.2"/>
</g>
<path d="M279.3,229.3 H366.4" stroke="#fff" stroke-width="1.6" fill="none"/>
<path d="M248,230.2 H262" stroke="#fff" stroke-width="1.4" fill="none"/>
<circle cx="247.8" cy="230.2" r="2.2" fill="#fff"/>
<path d="M376,229.4 H383" stroke="#fff" stroke-width="1.4" fill="none"/>
<circle cx="383.2" cy="229.4" r="2.1" fill="#fff"/>
<text x="0" y="0" transform="translate(234.5,283) rotate(-6) scale(0.9,1)" font-family="'Liberation Serif',serif" font-weight="bold" font-style="italic" font-size="57.5" fill="#fff" stroke="#fff" stroke-width="1.1" letter-spacing="0.6"><tspan font-size="73">B</tspan>icycle</text>
<g stroke="#e4582f" fill="none" stroke-width="2">
<path d="M236,406 H257.5"/>
<path d="M229,398.5 L236,406 L229,413.5 M234,398.5 L241,406 L234,413.5 M239,398.5 L246,406 L239,413.5" stroke-width="1.6"/>
<path d="M370.5,406 H392"/>
</g>
<path d="M388,401.4 L407,406 L388,410.8 Z" fill="#e4582f"/>

</svg>
<!-- /BADGE -->
<div class="abs" id="mtn" style="left:211.3px;top:293.8px;font-family:'Liberation Sans',sans-serif;font-size:88.5px;line-height:88.5px;letter-spacing:12px;color:#e9c03a;white-space:nowrap;transform:scaleX(0.3845);transform-origin:0 0;text-shadow:6.5px 0 0 #e9c03a,-6.5px 0 0 #e9c03a,3.2px 0 0 #e9c03a,-3.2px 0 0 #e9c03a,0 0.75px 0 #e9c03a,0 -0.75px 0 #e9c03a,6.5px 0.75px 0 #e9c03a,-6.5px 0.75px 0 #e9c03a,6.5px -0.75px 0 #e9c03a,-6.5px -0.75px 0 #e9c03a;">MOUNTAIN</div>
<div class="abs" id="exp" style="left:259.8px;top:389.2px;font-family:'Liberation Sans',sans-serif;font-size:35.5px;line-height:35.5px;letter-spacing:5px;color:#e4582f;white-space:nowrap;transform:scaleX(0.417);transform-origin:0 0;text-shadow:1px 0 0 #e4582f,-1px 0 0 #e4582f;">EXPEDITION</div>
<!-- HRULER -->
<svg class="abs" style="left:74px;top:94px" width="563" height="16" viewBox="74 94 563 16" shape-rendering="crispEdges">
<rect x="74" y="94" width="563" height="16" fill="#353535"/>
<path d="M89.5 94 V110" stroke="#6e6e6e" stroke-width="1" fill="none"/>
<path d="M78.5 94 V110 M74 98.5 H89" stroke="#6a6a6a" stroke-width="1" fill="none"/>
<path d="M96.5 106.5 V110" stroke="#858585" stroke-width="1"/>
<path d="M103.5 94 V110" stroke="#6e6e6e" stroke-width="1"/>
<path d="M123.5 106.5 V110" stroke="#858585" stroke-width="1"/>
<path d="M130.5 106.5 V110" stroke="#858585" stroke-width="1"/>
<path d="M136.5 94 V110" stroke="#6e6e6e" stroke-width="1"/>
<path d="M157.5 106.5 V110" stroke="#858585" stroke-width="1"/>
<path d="M163.5 106.5 V110" stroke="#858585" stroke-width="1"/>
<path d="M170.5 94 V110" stroke="#6e6e6e" stroke-width="1"/>
<path d="M190.5 106.5 V110" stroke="#858585" stroke-width="1"/>
<path d="M197.5 106.5 V110" stroke="#858585" stroke-width="1"/>
<path d="M204.5 94 V110" stroke="#6e6e6e" stroke-width="1"/>
<path d="M224.5 106.5 V110" stroke="#858585" stroke-width="1"/>
<path d="M230.5 106.5 V110" stroke="#858585" stroke-width="1"/>
<path d="M237.5 94 V110" stroke="#6e6e6e" stroke-width="1"/>
<path d="M257.5 106.5 V110" stroke="#858585" stroke-width="1"/>
<path d="M264.5 106.5 V110" stroke="#858585" stroke-width="1"/>
<path d="M271.5 94 V110" stroke="#6e6e6e" stroke-width="1"/>
<path d="M291.5 106.5 V110" stroke="#858585" stroke-width="1"/>
<path d="M298.5 106.5 V110" stroke="#858585" stroke-width="1"/>
<path d="M304.5 94 V110" stroke="#6e6e6e" stroke-width="1"/>
<path d="M325.5 106.5 V110" stroke="#858585" stroke-width="1"/>
<path d="M331.5 106.5 V110" stroke="#858585" stroke-width="1"/>
<path d="M338.5 94 V110" stroke="#6e6e6e" stroke-width="1"/>
<path d="M358.5 106.5 V110" stroke="#858585" stroke-width="1"/>
<path d="M365.5 106.5 V110" stroke="#858585" stroke-width="1"/>
<path d="M372.5 94 V110" stroke="#6e6e6e" stroke-width="1"/>
<path d="M392.5 106.5 V110" stroke="#858585" stroke-width="1"/>
<path d="M398.5 106.5 V110" stroke="#858585" stroke-width="1"/>
<path d="M405.5 94 V110" stroke="#6e6e6e" stroke-width="1"/>
<path d="M425.5 106.5 V110" stroke="#858585" stroke-width="1"/>
<path d="M432.5 106.5 V110" stroke="#858585" stroke-width="1"/>
<path d="M439.5 94 V110" stroke="#6e6e6e" stroke-width="1"/>
<path d="M459.5 106.5 V110" stroke="#858585" stroke-width="1"/>
<path d="M466.5 106.5 V110" stroke="#858585" stroke-width="1"/>
<path d="M472.5 94 V110" stroke="#6e6e6e" stroke-width="1"/>
<path d="M493.5 106.5 V110" stroke="#858585" stroke-width="1"/>
<path d="M499.5 106.5 V110" stroke="#858585" stroke-width="1"/>
<path d="M506.5 94 V110" stroke="#6e6e6e" stroke-width="1"/>
<path d="M526.5 106.5 V110" stroke="#858585" stroke-width="1"/>
<path d="M533.5 106.5 V110" stroke="#858585" stroke-width="1"/>
<path d="M540.5 94 V110" stroke="#6e6e6e" stroke-width="1"/>
<path d="M560.5 106.5 V110" stroke="#858585" stroke-width="1"/>
<path d="M566.5 106.5 V110" stroke="#858585" stroke-width="1"/>
<path d="M573.5 94 V110" stroke="#6e6e6e" stroke-width="1"/>
<path d="M593.5 106.5 V110" stroke="#858585" stroke-width="1"/>
<path d="M600.5 106.5 V110" stroke="#858585" stroke-width="1"/>
<path d="M607.5 94 V110" stroke="#6e6e6e" stroke-width="1"/>
<path d="M627.5 106.5 V110" stroke="#858585" stroke-width="1"/>
<path d="M634.5 106.5 V110" stroke="#858585" stroke-width="1"/>
<path d="M640.5 94 V110" stroke="#6e6e6e" stroke-width="1"/>
<path d="M142.5 94 V110" stroke="#9a9a9a" stroke-width="1" stroke-dasharray="1 1"/>
</svg>
<div class="rl" style="left:105.8px;top:98.7px">130</div>
<div class="rl" style="left:138.8px;top:98.7px">140</div>
<div class="rl" style="left:172.8px;top:98.7px">150</div>
<div class="rl" style="left:206.8px;top:98.7px">160</div>
<div class="rl" style="left:239.8px;top:98.7px">170</div>
<div class="rl" style="left:273.8px;top:98.7px">180</div>
<div class="rl" style="left:306.8px;top:98.7px">190</div>
<div class="rl" style="left:340.8px;top:98.7px">200</div>
<div class="rl" style="left:374.8px;top:98.7px">210</div>
<div class="rl" style="left:407.8px;top:98.7px">220</div>
<div class="rl" style="left:441.8px;top:98.7px">230</div>
<div class="rl" style="left:474.8px;top:98.7px">240</div>
<div class="rl" style="left:508.8px;top:98.7px">250</div>
<div class="rl" style="left:542.8px;top:98.7px">260</div>
<div class="rl" style="left:575.8px;top:98.7px">270</div>
<div class="rl" style="left:609.8px;top:98.7px">280</div>
<!-- /HRULER -->
<!-- VRULER -->
<svg class="abs" style="left:74px;top:110px" width="16" height="447" viewBox="74 110 16 447" shape-rendering="crispEdges">
<rect x="74" y="110" width="16" height="447" fill="#353535"/>
<path d="M74 114.5 H90" stroke="#6e6e6e" stroke-width="1"/>
<path d="M86 121.5 H90" stroke="#858585" stroke-width="1"/>
<path d="M86 127.5 H90" stroke="#858585" stroke-width="1"/>
<path d="M86 134.5 H90" stroke="#858585" stroke-width="1"/>
<path d="M86 141.5 H90" stroke="#858585" stroke-width="1"/>
<path d="M74 147.5 H90" stroke="#6e6e6e" stroke-width="1"/>
<path d="M86 154.5 H90" stroke="#858585" stroke-width="1"/>
<path d="M86 161.5 H90" stroke="#858585" stroke-width="1"/>
<path d="M86 168.5 H90" stroke="#858585" stroke-width="1"/>
<path d="M86 174.5 H90" stroke="#858585" stroke-width="1"/>
<path d="M74 181.5 H90" stroke="#6e6e6e" stroke-width="1"/>
<path d="M86 188.5 H90" stroke="#858585" stroke-width="1"/>
<path d="M86 194.5 H90" stroke="#858585" stroke-width="1"/>
<path d="M86 201.5 H90" stroke="#858585" stroke-width="1"/>
<path d="M86 208.5 H90" stroke="#858585" stroke-width="1"/>
<path d="M74 215.5 H90" stroke="#6e6e6e" stroke-width="1"/>
<path d="M86 221.5 H90" stroke="#858585" stroke-width="1"/>
<path d="M86 228.5 H90" stroke="#858585" stroke-width="1"/>
<path d="M86 235.5 H90" stroke="#858585" stroke-width="1"/>
<path d="M86 241.5 H90" stroke="#858585" stroke-width="1"/>
<path d="M74 248.5 H90" stroke="#6e6e6e" stroke-width="1"/>
<path d="M86 255.5 H90" stroke="#858585" stroke-width="1"/>
<path d="M86 262.5 H90" stroke="#858585" stroke-width="1"/>
<path d="M86 268.5 H90" stroke="#858585" stroke-width="1"/>
<path d="M86 275.5 H90" stroke="#858585" stroke-width="1"/>
<path d="M74 282.5 H90" stroke="#6e6e6e" stroke-width="1"/>
<path d="M86 289.5 H90" stroke="#858585" stroke-width="1"/>
<path d="M86 295.5 H90" stroke="#858585" stroke-width="1"/>
<path d="M86 302.5 H90" stroke="#858585" stroke-width="1"/>
<path d="M86 309.5 H90" stroke="#858585" stroke-width="1"/>
<path d="M74 315.5 H90" stroke="#6e6e6e" stroke-width="1"/>
<path d="M86 322.5 H90" stroke="#858585" stroke-width="1"/>
<path d="M86 329.5 H90" stroke="#858585" stroke-width="1"/>
<path d="M86 336.5 H90" stroke="#858585" stroke-width="1"/>
<path d="M86 342.5 H90" stroke="#858585" stroke-width="1"/>
<path d="M74 349.5 H90" stroke="#6e6e6e" stroke-width="1"/>
<path d="M86 356.5 H90" stroke="#858585" stroke-width="1"/>
<path d="M86 362.5 H90" stroke="#858585" stroke-width="1"/>
<path d="M86 369.5 H90" stroke="#858585" stroke-width="1"/>
<path d="M86 376.5 H90" stroke="#858585" stroke-width="1"/>
<path d="M74 383.5 H90" stroke="#6e6e6e" stroke-width="1"/>
<path d="M86 389.5 H90" stroke="#858585" stroke-width="1"/>
<path d="M86 396.5 H90" stroke="#858585" stroke-width="1"/>
<path d="M86 403.5 H90" stroke="#858585" stroke-width="1"/>
<path d="M86 409.5 H90" stroke="#858585" stroke-width="1"/>
<path d="M74 416.5 H90" stroke="#6e6e6e" stroke-width="1"/>
<path d="M86 423.5 H90" stroke="#858585" stroke-width="1"/>
<path d="M86 430.5 H90" stroke="#858585" stroke-width="1"/>
<path d="M86 436.5 H90" stroke="#858585" stroke-width="1"/>
<path d="M86 443.5 H90" stroke="#858585" stroke-width="1"/>
<path d="M74 450.5 H90" stroke="#6e6e6e" stroke-width="1"/>
<path d="M86 457.5 H90" stroke="#858585" stroke-width="1"/>
<path d="M86 463.5 H90" stroke="#858585" stroke-width="1"/>
<path d="M86 470.5 H90" stroke="#858585" stroke-width="1"/>
<path d="M86 477.5 H90" stroke="#858585" stroke-width="1"/>
<path d="M74 483.5 H90" stroke="#6e6e6e" stroke-width="1"/>
<path d="M86 490.5 H90" stroke="#858585" stroke-width="1"/>
<path d="M86 497.5 H90" stroke="#858585" stroke-width="1"/>
<path d="M86 504.5 H90" stroke="#858585" stroke-width="1"/>
<path d="M86 510.5 H90" stroke="#858585" stroke-width="1"/>
<path d="M74 517.5 H90" stroke="#6e6e6e" stroke-width="1"/>
<path d="M86 524.5 H90" stroke="#858585" stroke-width="1"/>
<path d="M86 530.5 H90" stroke="#858585" stroke-width="1"/>
<path d="M86 537.5 H90" stroke="#858585" stroke-width="1"/>
<path d="M86 544.5 H90" stroke="#858585" stroke-width="1"/>
<path d="M74 551.5 H90" stroke="#6e6e6e" stroke-width="1"/>
<path d="M74 171.5 H90" stroke="#9a9a9a" stroke-width="1" stroke-dasharray="1 1"/>
</svg>
<div class="rl" style="left:76px;top:120.9px;width:8px;text-align:center">7</div>
<div class="rl" style="left:76px;top:132.5px;width:8px;text-align:center">0</div>
<div class="rl" style="left:76px;top:153.9px;width:8px;text-align:center">8</div>
<div class="rl" style="left:76px;top:165.5px;width:8px;text-align:center">0</div>
<div class="rl" style="left:76px;top:187.9px;width:8px;text-align:center">9</div>
<div class="rl" style="left:76px;top:199.5px;width:8px;text-align:center">0</div>
<div class="rl" style="left:76px;top:210.3px;width:8px;text-align:center">1</div>
<div class="rl" style="left:76px;top:221.9px;width:8px;text-align:center">0</div>
<div class="rl" style="left:76px;top:233.5px;width:8px;text-align:center">0</div>
<div class="rl" style="left:76px;top:243.3px;width:8px;text-align:center">1</div>
<div class="rl" style="left:76px;top:254.9px;width:8px;text-align:center">1</div>
<div class="rl" style="left:76px;top:266.5px;width:8px;text-align:center">0</div>
<div class="rl" style="left:76px;top:277.3px;width:8px;text-align:center">1</div>
<div class="rl" style="left:76px;top:288.9px;width:8px;text-align:center">2</div>
<div class="rl" style="left:76px;top:300.5px;width:8px;text-align:center">0</div>
<div class="rl" style="left:76px;top:310.3px;width:8px;text-align:center">1</div>
<div class="rl" style="left:76px;top:321.9px;width:8px;text-align:center">3</div>
<div class="rl" style="left:76px;top:333.5px;width:8px;text-align:center">0</div>
<div class="rl" style="left:76px;top:344.3px;width:8px;text-align:center">1</div>
<div class="rl" style="left:76px;top:355.9px;width:8px;text-align:center">4</div>
<div class="rl" style="left:76px;top:367.5px;width:8px;text-align:center">0</div>
<div class="rl" style="left:76px;top:378.3px;width:8px;text-align:center">1</div>
<div class="rl" style="left:76px;top:389.9px;width:8px;text-align:center">5</div>
<div class="rl" style="left:76px;top:401.5px;width:8px;text-align:center">0</div>
<div class="rl" style="left:76px;top:411.3px;width:8px;text-align:center">1</div>
<div class="rl" style="left:76px;top:422.9px;width:8px;text-align:center">6</div>
<div class="rl" style="left:76px;top:434.5px;width:8px;text-align:center">0</div>
<div class="rl" style="left:76px;top:445.3px;width:8px;text-align:center">1</div>
<div class="rl" style="left:76px;top:456.9px;width:8px;text-align:center">7</div>
<div class="rl" style="left:76px;top:468.5px;width:8px;text-align:center">0</div>
<div class="rl" style="left:76px;top:478.3px;width:8px;text-align:center">1</div>
<div class="rl" style="left:76px;top:489.9px;width:8px;text-align:center">8</div>
<div class="rl" style="left:76px;top:501.5px;width:8px;text-align:center">0</div>
<div class="rl" style="left:76px;top:512.3px;width:8px;text-align:center">1</div>
<div class="rl" style="left:76px;top:523.9px;width:8px;text-align:center">9</div>
<div class="rl" style="left:76px;top:535.5px;width:8px;text-align:center">0</div>
<div class="rl" style="left:76px;top:546.3px;width:8px;text-align:center">2</div>
<!-- /VRULER -->
</body></html>
